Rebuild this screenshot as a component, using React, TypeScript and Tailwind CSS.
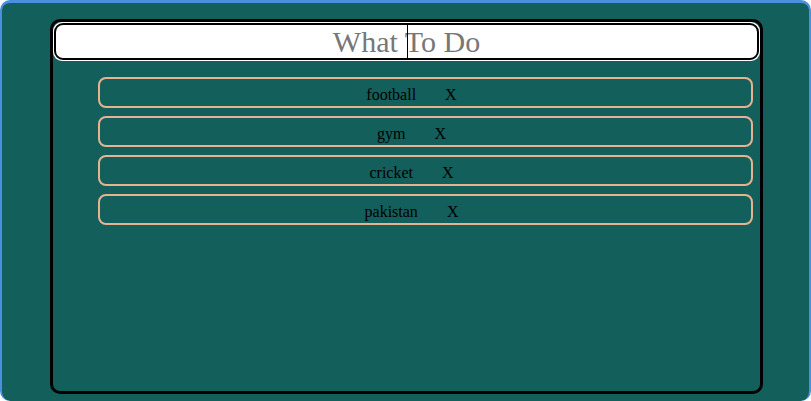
import React from 'react';

const todos = ['football', 'gym', 'cricket', 'pakistan'];

export default function App() {
  return (
    <div className="h-[401px] w-[811px] bg-white overflow-hidden">
      <div className="h-[401px] bg-[#135f5b] border-t-[3px] border-x-2 border-b-0 border-[#4a8fe0] rounded-[10px] pt-[16px]">
        <div className="ml-[48px] w-[713px] h-[375px] border-[3px] border-black rounded-[10px] flex flex-col">
          <div className="relative bg-white rounded-[9px] p-px">
            <input
              className="w-full h-[37px] bg-white border-2 border-black rounded-[9px] text-center text-[30px] leading-none text-[#777] outline-none placeholder:text-[#777]"
              style={{ fontFamily: '"Liberation Serif", serif' }}
              placeholder="What To Do"
            />
            <span className="absolute left-1/2 top-[2px] bottom-[2px] w-px bg-black" />
          </div>
          <ul className="flex flex-col gap-[8px] pl-[45px] pr-[7px] pt-[16px]" style={{ fontFamily: '"Liberation Serif", serif' }}>
            {todos.map((t) => (
              <li key={t} className="h-[31px] shrink-0 border-2 border-[#e6b391] rounded-[8px] flex items-start justify-center pt-[7px] pr-[28px] text-[16px] leading-[18px] text-black">
                <span>{t}</span>
                <span className="ml-[29px]">X</span>
              </li>
            ))}
          </ul>
        </div>
      </div>
    </div>
  );
}
